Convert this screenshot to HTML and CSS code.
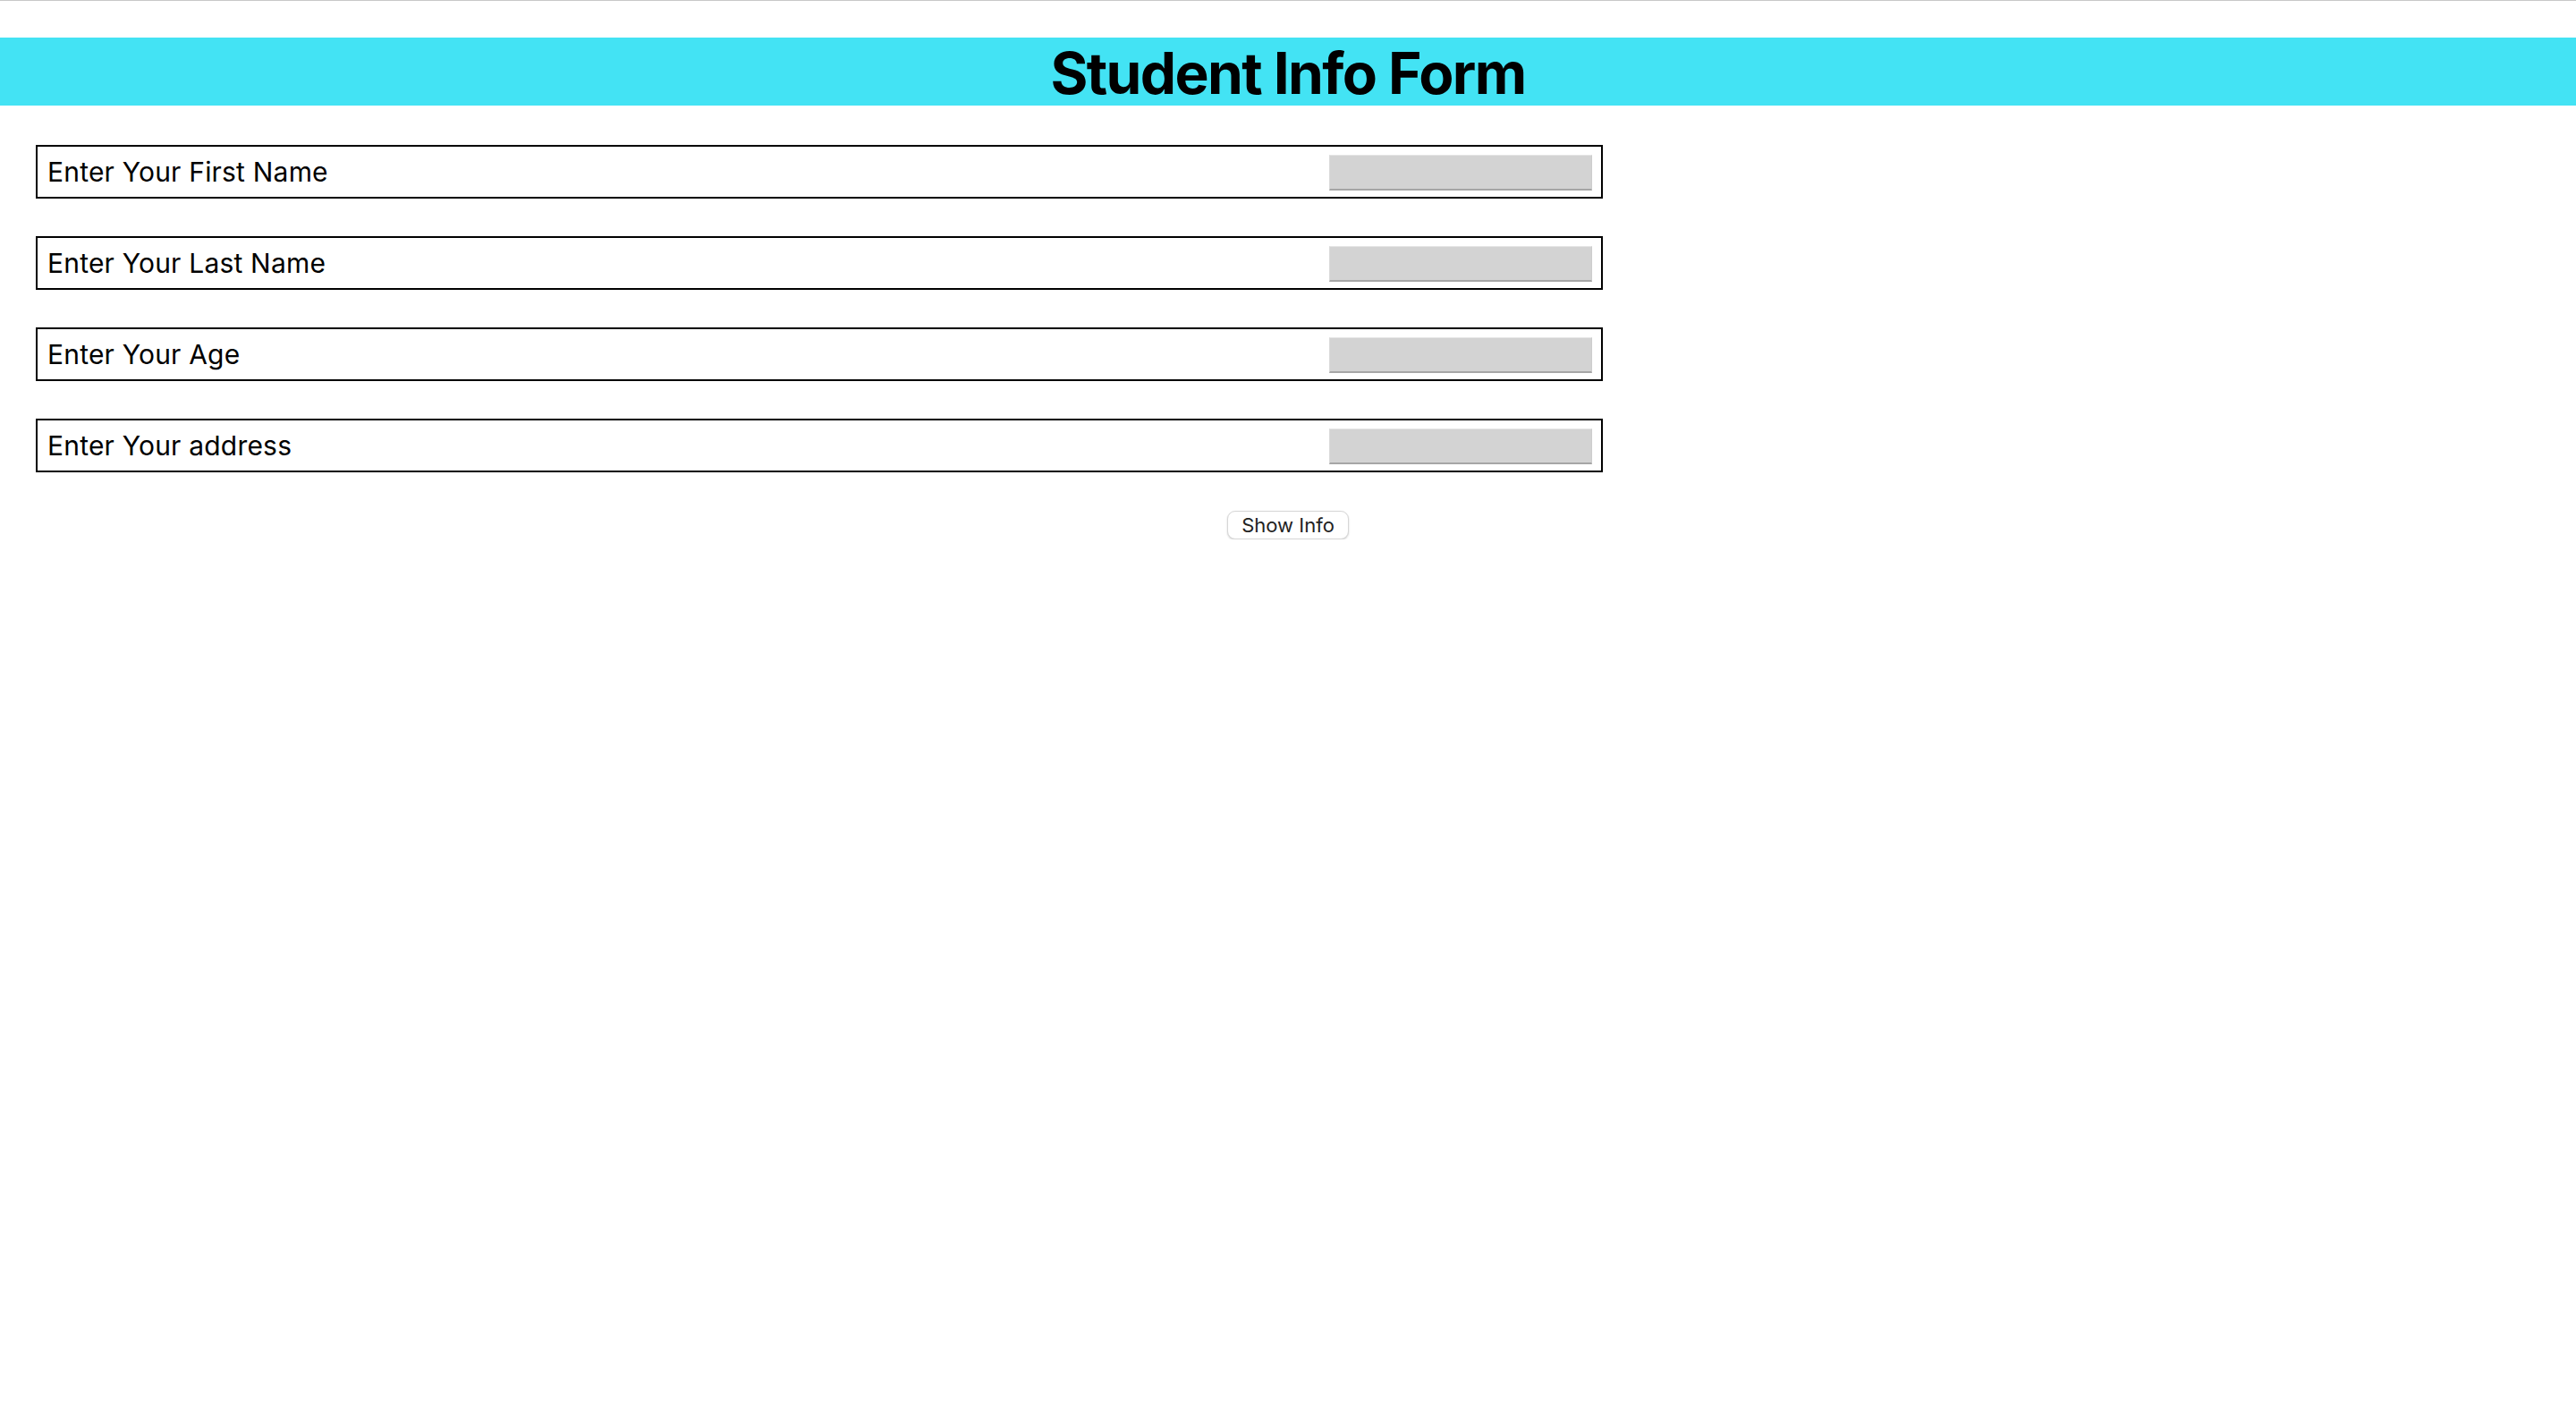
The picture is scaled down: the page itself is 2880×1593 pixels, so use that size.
FILE: index.html
```html
<!DOCTYPE html>
<html lang="en">
<head>
<meta charset="utf-8">
<title>Student Info Form</title>
<link rel="stylesheet" href="styles.css">
</head>
<body>
<div class="topline"></div>
<header class="banner">
  <h1 class="title">Student Info Form</h1>
</header>
<form class="form">
  <div class="row">
    <label class="label" for="first">Enter Your First Name</label>
    <input class="field" id="first" type="text">
  </div>
  <div class="row">
    <label class="label" for="last">Enter Your Last Name</label>
    <input class="field" id="last" type="text">
  </div>
  <div class="row">
    <label class="label" for="age">Enter Your Age</label>
    <input class="field" id="age" type="text">
  </div>
  <div class="row">
    <label class="label" for="addr">Enter Your address</label>
    <input class="field" id="addr" type="text">
  </div>
</form>
<div class="actions">
  <button class="btn" type="button">Show Info</button>
</div>
</body>
</html>
```

FILE: styles.css
```css
* { box-sizing: border-box; }
html, body { margin: 0; padding: 0; background: #fff; }
body {
  font-family: Inter, "Noto Sans", "DejaVu Sans", sans-serif;
  color: #000;
}
.topline {
  height: 1px;
  background: #c8c8c8;
}
.banner {
  margin-top: 41px;
  height: 76px;
  background: #43e3f4;
  display: flex;
  align-items: center;
  justify-content: center;
}
.title {
  margin: 0;
  padding-top: 3px;
  font-size: 64px;
  font-weight: 700;
  line-height: 73px;
  letter-spacing: -1.6px;
}
.form {
  margin: 44px 0 0 40px;
  width: 1752px;
  display: flex;
  flex-direction: column;
  gap: 42px;
}
.row {
  height: 60px;
  border: 2px solid #000;
  display: flex;
  align-items: center;
  justify-content: space-between;
  padding: 0 10px 0 11px;
}
.label {
  font-size: 30px;
  line-height: 1;
  letter-spacing: 0.2px;
}
.field {
  width: 294px;
  height: 40px;
  margin: 1px 0 0;
  background: #d3d3d3;
  border: none;
  border-top: 1px solid #e6e6e6;
  border-left: 1px solid #dadada;
  border-bottom: 2px solid #a6a6a6;
  border-right: 1px solid #cdcdcd;
  padding: 0 8px;
  font-size: 26px;
  font-family: inherit;
  outline: none;
}
.actions {
  display: flex;
  justify-content: center;
  margin-top: 43px;
}
.btn {
  width: 136px;
  height: 32px;
  padding: 0;
  background: #fff;
  border: 1px solid #d6d6d6;
  border-radius: 9px;
  box-shadow: 0 1px 2px rgba(0, 0, 0, 0.18);
  font-family: inherit;
  font-size: 22px;
  color: #222;
  line-height: 30px;
}
```
